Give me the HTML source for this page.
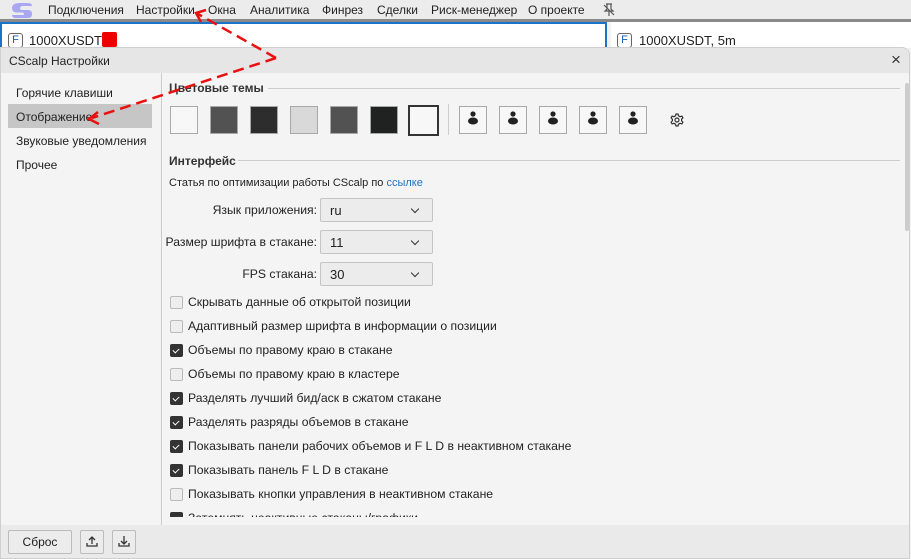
<!DOCTYPE html>
<html><head><meta charset="utf-8"><style>
*{box-sizing:border-box;margin:0;padding:0}
body{width:911px;height:559px;overflow:hidden;background:#f3f3f3;font-family:"Liberation Sans",sans-serif;font-size:12px;color:#222;position:relative}
.abs{position:absolute}
.menu{left:0;top:0;width:911px;height:22px;background:#ececec;border-bottom:3px solid #8a8a8a}
.menu span{position:absolute;top:3px;font-size:12px;color:#222}
.tab{top:22px;height:26px}
.dlg{left:0;top:47px;width:910px;height:512px;background:#f4f4f4;border:1px solid #cfcfcf;border-radius:0 8px 0 0;overflow:hidden}
.title{left:0;top:0;width:910px;height:25px;background:#e6e6e6}
.sw{width:28px;height:28px;border:1px solid #a8a8a8;top:106px}
.pi{width:28px;height:28px;border:1px solid #a8a8a8;top:106px;background:#f7f7f7}
.cb{width:13px;height:13px;border-radius:2px;left:170px}
.cb.off{border:1px solid #bbb;background:#eee}
.cb.on{background:#333}
.cb.on:after{content:"";position:absolute;left:4px;top:3px;width:3px;height:5px;border-right:1.4px solid #fff;border-bottom:1.4px solid #fff;transform:rotate(45deg)}
.lbl{left:188px;font-size:12.2px;color:#222;white-space:nowrap}
.sel{left:320px;width:113px;height:24px;border:1px solid #c4c4c4;border-radius:2px;background:#ececec;font-size:13px;padding:4px 0 0 9px}
.sel:after{content:"";position:absolute;right:14px;top:7px;width:5px;height:5px;border-right:1.3px solid #333;border-bottom:1.3px solid #333;transform:rotate(45deg)}
.rl{font-size:12.2px;text-align:right;width:200px;left:117px;white-space:nowrap}
</style></head><body>
<div class="abs menu">
<svg class="abs" style="left:11px;top:2px" width="22" height="17" viewBox="0 0 22 17"><path d="M9 1H17Q21 1 21 4H12Q9 4 9 6.5Q9 8 12 8H17Q21 8 21 12Q21 16 17 16H5Q1 16 1 13H12Q13 13 13 11.5Q13 10.5 11 10.5H6Q1 10.5 1 6Q1 1 9 1Z" fill="#a9a6f2"/></svg>
<span style="left:48px">Подключения</span><span style="left:136px">Настройки</span><span style="left:208px">Окна</span><span style="left:250px">Аналитика</span><span style="left:322px">Финрез</span><span style="left:377px">Сделки</span><span style="left:431px">Риск-менеджер</span><span style="left:528px">О проекте</span>
<svg class="abs" style="left:602px;top:3px" width="14" height="14" viewBox="0 0 14 14" fill="none" stroke="#555" stroke-width="1.2"><path d="M4 1h6M5 1v5L3 8h8L9 6V1M7 8v5M2 2l10 10"/></svg>
</div>
<div class="abs tab" style="left:0;width:607px;background:#fff;border:2px solid #1a73c8;border-bottom:none"></div>
<div class="abs" style="left:8px;top:33px;width:15px;height:15px;border:1px solid #666;border-radius:3px;font-size:11px;color:#1a5fb0;text-align:center;line-height:13px">F</div>
<div class="abs" style="left:29px;top:33px;font-size:13px;">1000XUSDT</div>
<div class="abs" style="left:102px;top:32px;width:15px;height:15px;background:#e00;border-radius:2px"></div>
<div class="abs tab" style="left:611px;width:300px;background:#fff"></div>
<div class="abs" style="left:617px;top:33px;width:15px;height:15px;border:1px solid #666;border-radius:3px;font-size:11px;color:#1a5fb0;text-align:center;line-height:13px">F</div>
<div class="abs" style="left:639px;top:33px;font-size:13px;">1000XUSDT, 5m</div>

<div class="abs dlg">
<div class="abs title"><div class="abs" style="left:8px;top:6px;font-size:12px">CScalp Настройки</div>
<div class="abs" style="left:890px;top:2px;font-size:17px;color:#333">×</div></div>
<div class="abs" style="left:160px;top:25px;width:1px;height:452px;background:#ccc"></div>
<div class="abs" style="left:904px;top:35px;width:4px;height:148px;background:#ccc;border-radius:2px"></div>
<div class="abs" style="left:0;top:477px;width:910px;height:35px;background:#eaeaea"></div>
</div>
<div class="abs" style="left:16px;top:86px">Горячие клавиши</div>
<div class="abs" style="left:8px;top:104px;width:144px;height:24px;background:#c6c6c6"></div>
<div class="abs" style="left:16px;top:110px">Отображение</div>
<div class="abs" style="left:16px;top:134px">Звуковые уведомления</div>
<div class="abs" style="left:16px;top:158px">Прочее</div>

<div class="abs" style="left:169px;top:81px;font-size:12px;font-weight:bold;color:#333">Цветовые темы</div>
<div class="abs" style="left:268px;top:88px;width:632px;height:1px;background:#ccc"></div>
<div class="abs sw" style="left:170px;background:#f7f7f7"></div>
<div class="abs sw" style="left:210px;background:#525252"></div>
<div class="abs sw" style="left:250px;background:#2d2d2d"></div>
<div class="abs sw" style="left:290px;background:#d9d9d9"></div>
<div class="abs sw" style="left:330px;background:#525252"></div>
<div class="abs sw" style="left:370px;background:#202221"></div>
<div class="abs" style="left:408px;top:105px;width:31px;height:31px;border:2px solid #333;background:#f7f7f7"></div>
<div class="abs" style="left:448px;top:104px;width:1px;height:31px;background:#ccc"></div>
<svg width="0" height="0"><defs><g id="p"><circle cx="13" cy="7" r="2.6" fill="#222"/><ellipse cx="13" cy="14" rx="5" ry="3.5" fill="#222"/></g></defs></svg>
<div class="abs pi" style="left:459px"><svg width="28" height="28"><use href="#p"/></svg></div>
<div class="abs pi" style="left:499px"><svg width="28" height="28"><use href="#p"/></svg></div>
<div class="abs pi" style="left:539px"><svg width="28" height="28"><use href="#p"/></svg></div>
<div class="abs pi" style="left:579px"><svg width="28" height="28"><use href="#p"/></svg></div>
<div class="abs pi" style="left:619px"><svg width="28" height="28"><use href="#p"/></svg></div>
<svg class="abs" style="left:670px;top:113px" width="14" height="14" viewBox="0 0 14 14" fill="none" stroke="#333" stroke-width="1.2"><circle cx="7" cy="7" r="2"/><path d="M6 1h2l.5 1.8 1.6.9 1.8-.6 1 1.7-1.3 1.4v1.6l1.3 1.4-1 1.7-1.8-.6-1.6.9L8 13H6l-.5-1.8-1.6-.9-1.8.6-1-1.7 1.3-1.4V6.2L1.1 4.8l1-1.7 1.8.6 1.6-.9z"/></svg>

<div class="abs" style="left:169px;top:154px;font-size:12px;font-weight:bold;color:#333">Интерфейс</div>
<div class="abs" style="left:238px;top:160px;width:662px;height:1px;background:#ccc"></div>
<div class="abs" style="left:169px;top:177px;font-size:11px">Статья по оптимизации работы CScalp по <span style="color:#1a73c8">ссылке</span></div>
<div class="abs rl" style="top:203px">Язык приложения:</div><div class="abs sel" style="top:198px">ru</div>
<div class="abs rl" style="top:235px">Размер шрифта в стакане:</div><div class="abs sel" style="top:230px">11</div>
<div class="abs rl" style="top:267px">FPS стакана:</div><div class="abs sel" style="top:262px">30</div>

<div class="abs" style="left:0;top:296px;width:900px;height:221px;overflow:hidden">
<div style="position:relative;top:-296px">
<div class="abs cb off" style="top:296px"></div><div class="abs lbl" style="top:295px">Скрывать данные об открытой позиции</div>
<div class="abs cb off" style="top:320px"></div><div class="abs lbl" style="top:319px">Адаптивный размер шрифта в информации о позиции</div>
<div class="abs cb on" style="top:344px"></div><div class="abs lbl" style="top:343px">Объемы по правому краю в стакане</div>
<div class="abs cb off" style="top:368px"></div><div class="abs lbl" style="top:367px">Объемы по правому краю в кластере</div>
<div class="abs cb on" style="top:392px"></div><div class="abs lbl" style="top:391px">Разделять лучший бид/аск в сжатом стакане</div>
<div class="abs cb on" style="top:416px"></div><div class="abs lbl" style="top:415px">Разделять разряды объемов в стакане</div>
<div class="abs cb on" style="top:440px"></div><div class="abs lbl" style="top:439px">Показывать панели рабочих объемов и F L D в неактивном стакане</div>
<div class="abs cb on" style="top:464px"></div><div class="abs lbl" style="top:463px">Показывать панель F L D в стакане</div>
<div class="abs cb off" style="top:488px"></div><div class="abs lbl" style="top:487px">Показывать кнопки управления в неактивном стакане</div>
<div class="abs cb on" style="top:512px"></div><div class="abs lbl" style="top:511px">Затемнять неактивные стаканы/графики</div>
</div></div>

<div class="abs" style="left:8px;top:530px;width:64px;height:24px;border:1px solid #bbb;border-radius:2px;background:#ececec;text-align:center;line-height:22px;font-size:12px">Сброс</div>
<div class="abs" style="left:80px;top:530px;width:24px;height:24px;border:1px solid #bbb;border-radius:2px;background:#ececec"><svg width="22" height="22" fill="none" stroke="#333" stroke-width="1.3"><path d="M6 12v3h10v-3M11 13V6M8 9l3-3 3 3"/></svg></div>
<div class="abs" style="left:112px;top:530px;width:24px;height:24px;border:1px solid #bbb;border-radius:2px;background:#ececec"><svg width="22" height="22" fill="none" stroke="#333" stroke-width="1.3"><path d="M6 12v3h10v-3M11 5v8M8 10l3 3 3-3"/></svg></div>

<svg class="abs" style="left:0;top:0" width="911" height="559" fill="none" stroke="#e81010" stroke-width="2.5">
<path d="M276 58L198 14" stroke-dasharray="11 6"/>
<path d="M276 58L92 118" stroke-dasharray="11 6"/>
<path d="M206 10L196 13L201 22M98 112L89 119L99 124" stroke-dasharray="none"/>
</svg>
</body></html>
